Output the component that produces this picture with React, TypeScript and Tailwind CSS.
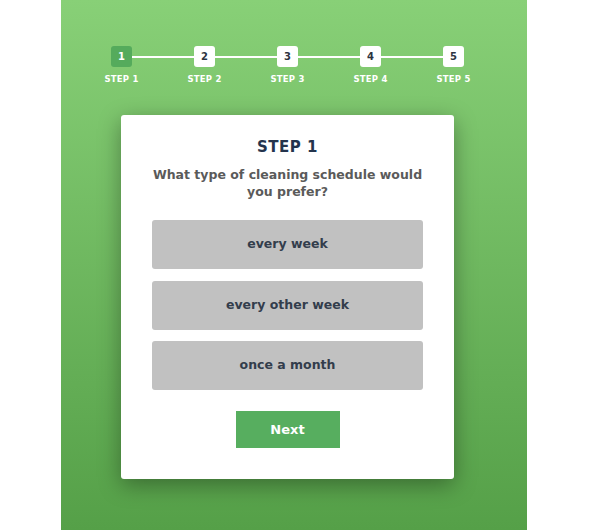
const steps = [1, 2, 3, 4, 5];
const options = ['every week', 'every other week', 'once a month'];

const font = { fontFamily: '"DejaVu Sans", "Open Sans", sans-serif' };

export default function App() {
  return (
    <div className="w-[590px] h-[530px] bg-white flex" style={font}>
      <div className="ml-[61px] w-[466px] h-full bg-gradient-to-b from-[#88d077] to-[#55a048] flex flex-col">
        {/* Progress steps */}
        <div className="mt-[46px] ml-[50px] flex items-center">
          {steps.map((n, i) => (
            <div key={n} className="flex items-center">
              {i > 0 && <div className="w-[62px] h-[2px] bg-white" />}
              <div
                className={
                  n === 1
                    ? 'w-[21px] h-[21px] rounded-[3px] bg-[#55ab5c] text-white text-[10px] font-bold flex items-center justify-center'
                    : 'w-[21px] h-[21px] rounded-[3px] bg-white text-[#2d3440] text-[10px] font-bold flex items-center justify-center'
                }
              >
                {n}
              </div>
            </div>
          ))}
        </div>
        <div className="mt-[6px] ml-[50px] flex items-center">
          {steps.map((n, i) => (
            <div key={n} className="flex items-center">
              {i > 0 && <div className="w-[62px]" />}
              <div className="w-[21px] flex justify-center whitespace-nowrap text-white text-[8.5px] font-bold tracking-[0.2px]">
                STEP {n}
              </div>
            </div>
          ))}
        </div>

        {/* Card */}
        <div className="mt-[29px] ml-[60px] w-[333px] h-[364px] bg-white rounded-[3px] shadow-[0_6px_22px_rgba(0,0,0,0.35)] flex flex-col items-center">
          <div className="mt-[21px] text-[15px] font-bold text-[#24344d] tracking-[0.5px]">STEP 1</div>
          <div className="mt-[8px] w-[280px] text-center text-[12.5px] leading-[17px] font-semibold text-[#5a5a5a]">
            What type of cleaning schedule would you prefer?
          </div>
          <div className="mt-[20px] flex flex-col gap-[11.5px]">
            {options.map((o) => (
              <div
                key={o}
                className="w-[271px] h-[49px] bg-[#c1c1c1] rounded-[3px] flex items-center justify-center text-[12.5px] font-semibold text-[#333d4c]"
              >
                {o}
              </div>
            ))}
          </div>
          <div className="mt-[21px] w-[104px] h-[37px] bg-[#57ae5f] flex items-center justify-center text-white text-[13px] font-bold">
            Next
          </div>
        </div>
      </div>
    </div>
  );
}
